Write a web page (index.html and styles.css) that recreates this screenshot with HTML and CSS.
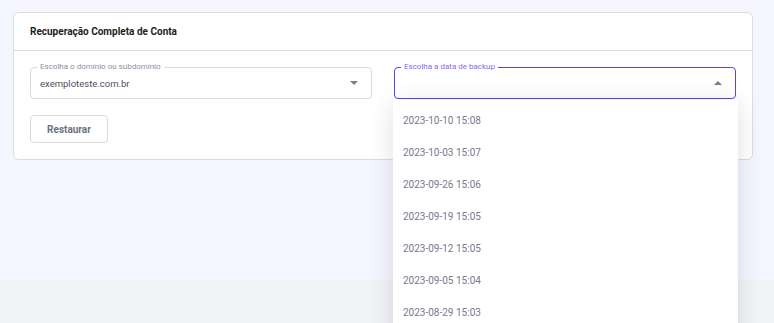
FILE: index.html
```html
<!DOCTYPE html>
<html lang="pt-BR">
<head>
<meta charset="utf-8">
<link rel="stylesheet" href="styles.css">
</head>
<body>
<div class="page">
  <section class="card">
    <header class="card-header">Recuperação Completa de Conta</header>
    <div class="card-body">
      <div class="fields">
        <div class="field">
          <span class="field-label">Escolha o domínio ou subdomínio</span>
          <span class="field-value">exemploteste.com.br</span>
          <svg class="caret" width="8" height="4" viewBox="0 0 8 4"><path d="M0 0h8L4 4z" fill="#7a7c8c"/></svg>
        </div>
        <div class="field active">
          <span class="field-label">Escolha a data de backup</span>
          <span class="field-value"></span>
          <svg class="caret" width="8" height="4" viewBox="0 0 8 4"><path d="M0 4h8L4 0z" fill="#7a7c8c"/></svg>
          <ul class="menu">
            <li>2023-10-10 15:08</li>
            <li>2023-10-03 15:07</li>
            <li>2023-09-26 15:06</li>
            <li>2023-09-19 15:05</li>
            <li>2023-09-12 15:05</li>
            <li>2023-09-05 15:04</li>
            <li>2023-08-29 15:03</li>
          </ul>
        </div>
      </div>
      <button class="btn">Restaurar</button>
    </div>
  </section>
</div>
<div class="footer"></div>
</body>
</html>
```
FILE: styles.css
```css
html, body { margin: 0; padding: 0; }
body {
  font-family: Roboto, "Noto Sans", sans-serif;
  background: #f2f3f6;
  height: 323px;
  overflow: hidden;
}
.page {
  background: #f4f5ff;
  height: 280px;
  padding: 12px 21px 0 13px;
  box-sizing: border-box;
}
.card {
  background: #fff;
  border: 1px solid #dadce0;
  border-radius: 6px;
}
.card-header {
  height: 37px;
  border-bottom: 1px solid #dadce0;
  padding-left: 16px;
  display: flex;
  align-items: center;
  font-size: 10px;
  font-weight: 700;
  color: #1d1e20;
}
.card-body {
  padding: 16px;
}
.fields {
  display: grid;
  grid-template-columns: 1fr 1fr;
  gap: 22px;
}
.field {
  position: relative;
  height: 32px;
  box-sizing: border-box;
  border: 1px solid #dadce0;
  border-radius: 4px;
  display: flex;
  align-items: center;
  padding: 0 9px;
}
.field.active { border-color: #673de6; }
.field-label {
  position: absolute;
  left: 6px;
  top: -6px;
  padding: 0 3px;
  background: #fff;
  font-size: 8px;
  line-height: 10px;
  color: #8c8fa0;
}
.field.active .field-label { color: #8c66f0; }
.field-value {
  flex: 1;
  font-size: 9.5px;
  color: #4d4f5c;
}
.caret { margin-right: 4px; }
.menu {
  position: absolute;
  left: -2px;
  top: 32px;
  width: 345px;
  height: 240px;
  margin: 0;
  padding: 4px 0;
  list-style: none;
  background: #fff;
  border-radius: 4px;
  box-shadow: 0 4px 24px rgba(29, 30, 32, 0.14);
  z-index: 5;
}
.menu li {
  height: 32px;
  display: flex;
  align-items: center;
  padding-left: 10px;
  font-size: 10px;
  color: #777a8b;
}
.btn {
  margin-top: 16px;
  height: 28px;
  width: 78px;
  background: #fff;
  border: 1px solid #dadce0;
  border-radius: 4px;
  font-family: inherit;
  font-size: 10px;
  font-weight: 700;
  color: #6d7081;
  display: block;
  padding: 0;
}
```
